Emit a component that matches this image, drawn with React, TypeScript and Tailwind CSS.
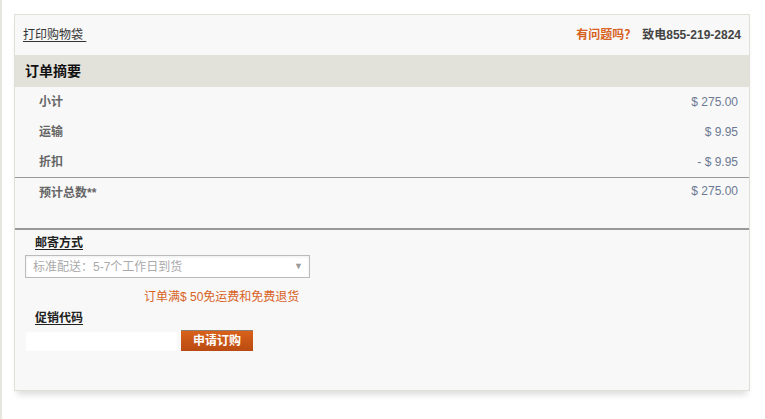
import React from "react";

const rows = [
  { label: "小计", value: "$ 275.00" },
  { label: "运输", value: "$ 9.95" },
  { label: "折扣", value: "- $ 9.95" },
];

export default function App() {
  return (
    <div
      className="h-[419px] w-[765px] bg-white border-l-2 border-[#e6e5de] pt-[14px] pl-[12px]"
      style={{ fontFamily: '"Liberation Sans", Arial, "Noto Sans CJK SC", sans-serif' }}
    >
      <div className="w-[736px] h-[377px] border border-[#e1e0d8] bg-[#f8f8f8] shadow-[0_7px_6px_-3px_rgba(0,0,0,0.13)]">
        {/* top bar */}
        <div className="h-[40px] flex items-center justify-between pl-[8px] pr-[8px] text-[12px]">
          <a className="text-[#333] underline underline-offset-2">打印购物袋&nbsp;</a>
          <div className="font-bold flex items-center">
            <span className="text-[#d7621e]">有问题吗？</span>
            <span className="text-[#444] ml-[6px]">致电855-219-2824</span>
          </div>
        </div>

        {/* summary header */}
        <div className="h-[32px] bg-[#e3e2da] flex items-center pl-[10px] text-[14px] font-bold text-[#111]">
          订单摘要
        </div>

        {rows.map((r) => (
          <div key={r.label} className="h-[30px] flex items-center justify-between pl-[24px] pr-[11px] text-[12px]">
            <span className="font-bold text-[#666]">{r.label}</span>
            <span className="text-[#6c7893]">{r.value}</span>
          </div>
        ))}

        <div className="border-t border-[#999] h-[51px] flex justify-between items-start pl-[24px] pr-[11px] text-[12px]">
          <span className="font-bold text-[#666] mt-[6px]">预计总数**</span>
          <span className="text-[#6c7893] mt-[4px]">$ 275.00</span>
        </div>

        {/* shipping */}
        <div className="border-t-2 border-[#999] pt-[5px] pl-[10px] text-[12px]">
          <div className="pl-[10px] font-bold text-[#222] underline underline-offset-2 leading-[16px]">邮寄方式</div>
          <div className="mt-[4px] w-[285px] h-[23px] border border-[#bbb] bg-white flex items-center justify-between pl-[7px] pr-[6px] shadow-[inset_0_1px_3px_rgba(0,0,0,0.08)]">
            <span className="text-[#aaa]">标准配送：5-7个工作日到货</span>
            <span className="text-[#999] text-[9px]">▼</span>
          </div>
          <div className="mt-[11px] pl-[119px] text-[#d7621e] leading-[16px]">订单满$ 50免运费和免费退货</div>
        </div>

        {/* promo */}
        <div className="pt-[5px] pl-[10px] text-[12px]">
          <div className="pl-[10px] font-bold text-[#222] underline underline-offset-2 leading-[16px]">促销代码</div>
          <div className="mt-[4px] flex items-center gap-[3px]">
            <div className="w-[153px] h-[21px] bg-white shadow-[inset_0_1px_3px_rgba(0,0,0,0.06)]" />
            <button className="w-[72px] h-[21px] bg-gradient-to-b from-[#d9611a] to-[#b94b12] border-t border-[#8a7f74] text-white font-bold text-[12px] leading-[20px]">
              申请订购
            </button>
          </div>
        </div>
      </div>
    </div>
  );
}
